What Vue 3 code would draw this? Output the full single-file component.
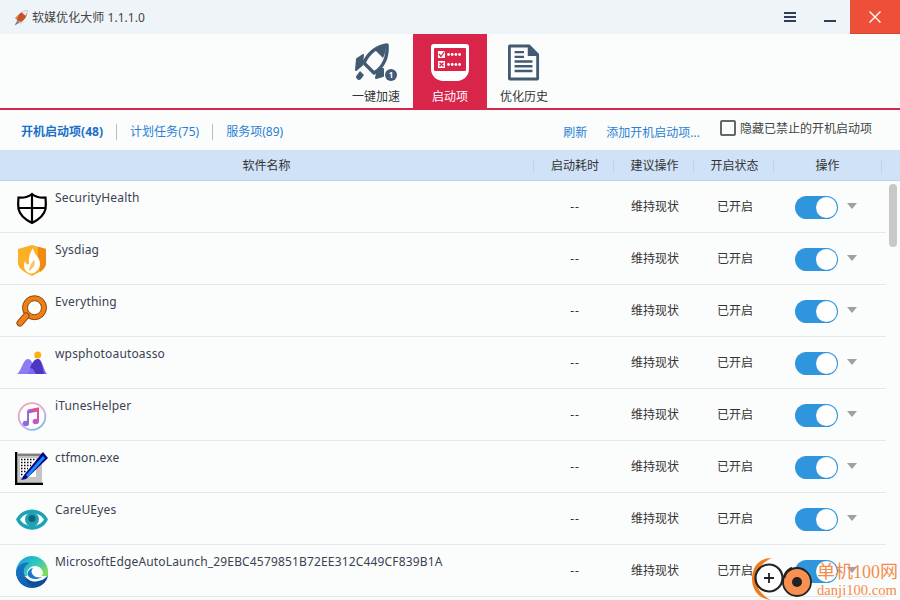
<script setup>
const apps = [
  { name: 'SecurityHealth', icon: 'shield' },
  { name: 'Sysdiag', icon: 'flame' },
  { name: 'Everything', icon: 'search' },
  { name: 'wpsphotoautoasso', icon: 'wps' },
  { name: 'iTunesHelper', icon: 'itunes' },
  { name: 'ctfmon.exe', icon: 'ctf' },
  { name: 'CareUEyes', icon: 'eye' },
  { name: 'MicrosoftEdgeAutoLaunch_29EBC4579851B72EE312C449CF839B1A', icon: 'edge' },
]
</script>

<template>
  <div class="win">
    <div class="titlebar">
      <svg class="logo" width="14" height="17" viewBox="0 0 14 17">
        <path d="M13.500 1 C9 1.500 5 4 3.500 8 L3 12 L7 13 C11 11 13.500 6 13.500 1Z" fill="#c2542a" />
        <path d="M13.500 1 C11 1.200 9 2 7.500 3.200 L11.300 6.800 C12.700 5 13.500 3 13.500 1Z" fill="#e8e8e8" />
        <path d="M4 6 L1 9 L3 11Z M7 13 L6 16 L9 11Z" fill="#e07a30" />
        <path d="M3 12 L0.500 16.500 L6 13.500Z" fill="#6f7f90" />
      </svg>
      <span class="title">软媒优化大师 1.1.1.0</span>
      <div class="winbtns">
        <div class="btn">
          <span class="menu"><i></i><i></i><i></i></span>
        </div>
        <div class="btn"><span class="min"></span></div>
        <div class="btn close">
          <svg width="12" height="12" viewBox="0 0 12 12">
            <path d="M0.500 0.500 L11.500 11.500 M11.500 0.500 L0.500 11.500" stroke="#fff" stroke-width="1.400" />
          </svg>
        </div>
      </div>
    </div>

    <div class="toolbar">
      <div class="tool">
        <svg class="rocket" width="50" height="45" viewBox="0 0 50 45">
          <g fill="#435a73" stroke="#435a73" stroke-width="2" stroke-linejoin="round">
            <path d="M13 15 L7 19 L6 30 L12 25Z" />
            <path d="M28 29 L26 38 L33 36 L33 29Z" />
          </g>
          <path d="M37 5 C27 6 18 13 14 23 L24 33 C34 27 38 16 37 5Z" fill="#fcfefe" stroke="#435a73" stroke-width="3.400" stroke-linejoin="round" />
          <path d="M25 10 C29 7 33 6 36 6 C36 10 35 14 33 18Z" fill="#435a73" />
          <path d="M10 31 L14 35 L11 39 A2.800 2.800 0 0 1 7 35Z" fill="#435a73" />
          <circle cx="41" cy="35" r="6" fill="#435a73" />
          <text x="41" y="38" class="badge">1</text>
        </svg>
        <span>一键加速</span>
      </div>
      <div class="tool active">
        <svg width="38" height="37" viewBox="0 0 38 37">
          <path d="M3 0 H35 A3 3 0 0 1 38 3 V25 C38 32 32 37 26 37 H12 C6 37 0 32 0 25 V3 A3 3 0 0 1 3 0Z" fill="#fff" />
          <rect x="3" y="4" width="32" height="23" rx="1" fill="#d9254a" />
          <rect x="7" y="7" width="7" height="7" fill="#fff" />
          <rect x="7" y="17" width="7" height="7" fill="#fff" />
          <path d="M8 10 L10 12.500 L13.500 7.500" stroke="#d9254a" fill="none" stroke-width="1.300" />
          <path d="M8.500 18.500 L12.500 22.500 M12.500 18.500 L8.500 22.500" stroke="#d9254a" fill="none" stroke-width="1.300" />
          <g fill="#fff">
            <circle cx="17.500" cy="10.500" r="1.400" /><circle cx="21.200" cy="10.500" r="1.400" /><circle cx="24.900" cy="10.500" r="1.400" /><circle cx="28.600" cy="10.500" r="1.400" />
            <circle cx="17.500" cy="20.500" r="1.400" /><circle cx="21.200" cy="20.500" r="1.400" /><circle cx="24.900" cy="20.500" r="1.400" /><circle cx="28.600" cy="20.500" r="1.400" />
          </g>
        </svg>
        <span>启动项</span>
      </div>
      <div class="tool">
        <svg width="32" height="37" viewBox="0 0 34 38">
          <path d="M2 0 H23 L33 10 V36 A2 2 0 0 1 31 38 H2 A2 2 0 0 1 0 36 V2 A2 2 0 0 1 2 0Z" fill="#435a73" />
          <path d="M3 3 H21 V12 H30 V35 H3Z" fill="#fcfefe" />
          <path d="M7 8 H17 M7 13 H17 M7 18 H26 M7 23 H26 M7 28 H26" stroke="#435a73" stroke-width="2.600" />
        </svg>
        <span>优化历史</span>
      </div>
    </div>

    <div class="tabs">
      <a class="tab on">开机启动项(48)</a>
      <a class="tab">计划任务(75)</a>
      <a class="tab">服务项(89)</a>
      <div class="spacer"></div>
      <a class="link refresh">刷新</a>
      <a class="link">添加开机启动项...</a>
      <label class="hide"><span class="check"></span>隐藏已禁止的开机启动项</label>
    </div>

    <div class="head">
      <div class="c-name">软件名称</div>
      <div class="c-time">启动耗时</div>
      <div class="c-tip">建议操作</div>
      <div class="c-state">开启状态</div>
      <div class="c-op">操作</div>
    </div>

    <div class="list">
      <div class="rows">
        <div v-for="a in apps" :key="a.name" class="row">
          <div class="c-name cell-name">
            <svg class="appicon" width="34" height="34" viewBox="0 0 34 34">
              <template v-if="a.icon === 'shield'">
                <path d="M17 3 C20 5.500 25 7 30.500 6.500 C31 11 31 14 30.500 18 C29 25 23 29 17 32 C11 29 5 25 3.500 18 C3 14 3 11 3.500 6.500 C9 7 14 5.500 17 3Z" fill="#fff" stroke="#000" stroke-width="2.200" />
                <path d="M17 3 V32 M3.500 17 H30.500" stroke="#000" stroke-width="2.200" />
              </template>
              <template v-else-if="a.icon === 'flame'">
                <path d="M3 6 L17 2 L31 6 V20 C31 26 23 30 17 33 C11 30 3 26 3 20Z" fill="#fbb025" />
                <path d="M23 3.700 L31 6 V20 C31 24 28 27 25 29 L23 15Z" fill="#f28a12" />
                <path d="M18 5 C19 12 26 15 25 22 C24 28 18 32 14 30 C9 28 8 23 10 18 C11 21 12 22 14 21 C13 15 15 10 18 5Z" fill="#fff" />
                <path d="M19 17 C21 21 19 25 14 28 C14 24 16 20 19 17Z" fill="#fbc46a" />
              </template>
              <template v-else-if="a.icon === 'search'">
                <circle cx="19.500" cy="12.700" r="9.500" fill="#fff" stroke="#f08015" stroke-width="5" />
                <circle cx="19.500" cy="12.700" r="12" fill="none" stroke="#8a4510" stroke-width="1" />
                <circle cx="19.500" cy="12.700" r="7" fill="none" stroke="#8a4510" stroke-width="1" />
                <path d="M11 21 L5 28" stroke="#8a4510" stroke-width="7" stroke-linecap="round" />
                <path d="M11 21 L5 28" stroke="#f08015" stroke-width="5" stroke-linecap="round" />
              </template>
              <template v-else-if="a.icon === 'wps'">
                <circle cx="22.700" cy="8" r="3.500" fill="#fbb116" />
                <path d="M2 27 C6 25 8 12 13 12 C17 12 18 18 20 27Z" fill="#8a7cf5" />
                <path d="M12 27 C16 25 18 12 23 12 C27 12 29 24 32 27Z" fill="#7a68f0" />
                <path d="M15 21 C17 16 19 12 23 12 C25 12 26 14 27 18 L29 27 H21 L18 22Z" fill="#4f36c2" />
              </template>
              <template v-else-if="a.icon === 'itunes'">
                <defs>
                  <linearGradient id="itg" x1="0.800" y1="0" x2="0.200" y2="1">
                    <stop offset="0" stop-color="#f04f72" />
                    <stop offset="0.600" stop-color="#b45ad8" />
                    <stop offset="1" stop-color="#6a7ce8" />
                  </linearGradient>
                  <linearGradient id="itr" x1="0.100" y1="0" x2="0.900" y2="1">
                    <stop offset="0" stop-color="#f2a0b4" />
                    <stop offset="0.600" stop-color="#cdb0e8" />
                    <stop offset="1" stop-color="#5ab8ef" />
                  </linearGradient>
                </defs>
                <circle cx="17" cy="17.500" r="13.300" fill="#fff" stroke="url(#itr)" stroke-width="1.800" />
                <path d="M13 11.500 L23 9.500 V22 M13 11.500 V24.500" stroke="url(#itg)" stroke-width="2" fill="none" />
                <path d="M13 11.500 L23 9.500 V12.500 L13 14.500Z" fill="url(#itg)" />
                <ellipse cx="10.800" cy="24.500" rx="3.200" ry="2.700" fill="#8a6ae0" />
                <ellipse cx="20.800" cy="22.500" rx="3.200" ry="2.700" fill="#c45ac8" />
              </template>
              <template v-else-if="a.icon === 'ctf'">
                <rect x="1" y="2" width="26" height="30" fill="#c4c4c4" />
                <path d="M1 1 V33 H28" fill="none" stroke="#000" stroke-width="2.500" />
                <rect x="3" y="3" width="24" height="2" fill="#808080" />
                <rect x="5" y="7" width="16" height="19" fill="#fff" />
                <path d="M6 8.500 H20 M6 11.500 H18 M6 14.500 H16 M6 17.500 H13 M6 20.500 H11 M6 23.500 H9" stroke="#000" stroke-width="1.500" stroke-dasharray="1.500 1.500" />
                <path d="M9 24 L6 29 L11 28 L33 7 L28 1Z" fill="#050580" />
                <path d="M11 24 L28 5 L30 7 L13 26Z" fill="#1a8cff" />
              </template>
              <template v-else-if="a.icon === 'eye'">
                <path d="M1 16.500 C7 3 27 3 33 16.500 C27 30 7 30 1 16.500Z" fill="#1ea3b6" />
                <path d="M5 16.500 C10 8 24 8 29 16.500 C24 25 10 25 5 16.500Z" fill="#fff" />
                <circle cx="17" cy="16.500" r="7" fill="#1ea3b6" />
                <circle cx="17" cy="15.500" r="3.500" fill="#12607a" />
              </template>
              <template v-else-if="a.icon === 'edge'">
                <defs>
                  <linearGradient id="edg" x1="0.100" y1="0" x2="1" y2="0.700">
                    <stop offset="0" stop-color="#1a9fdc" />
                    <stop offset="0.550" stop-color="#2fc7c0" />
                    <stop offset="1" stop-color="#7edc5c" />
                  </linearGradient>
                  <linearGradient id="edb" x1="0" y1="0" x2="0.500" y2="1">
                    <stop offset="0" stop-color="#1a78c8" />
                    <stop offset="1" stop-color="#0e5fb0" />
                  </linearGradient>
                </defs>
                <path d="M1 17 A16 16 0 0 1 33 17 L33 21 H1Z" fill="url(#edg)" />
                <path d="M12 19 C12 14 16 11 20 11 C25 11 28 15 28 18 C28 20 27 21 25 21 L33 21 C31 27 27 31 22 32 L12 26Z" fill="#fbfdfd" />
                <path d="M1 17 C2 10 9 6 15 8 C10 10 8 14 9 19 C10 26 17 32 24 31 C21 33 19 33 17 33 C8 33 1 26 1 17Z" fill="url(#edb)" />
                <path d="M9 19 C11 24 16 27 21 26.500 C26 26 30 24 33 20.500 C32 26 28 31 22 32 C15 32 10 26 9 19Z" fill="#0c4f98" />
                <path d="M12.500 20 C12.500 16 15 13.500 18 13 C16 15 16 18 18 20 C20 22.500 24 23 27 22 C23 25 15 25 12.500 20Z" fill="#1a78c8" />
              </template>
            </svg>
            <span class="appname">{{ a.name }}</span>
          </div>
          <div class="c-time dash">--</div>
          <div class="c-tip">维持现状</div>
          <div class="c-state">已开启</div>
          <div class="c-op">
            <span class="switch"><i></i></span>
            <span class="caret"></span>
          </div>
        </div>
      </div>
      <div class="scroll"><div class="thumb"></div></div>
    </div>

    <div class="wm">
      <svg width="67" height="46" viewBox="0 0 67 46">
        <path d="M22 4 C8 4 2 14 2 25 C2 36 9 45 21 46 C13 42 6 35 6 25 C6 15 13 8 22 4Z" fill="#f07c1e" />
        <circle cx="19" cy="24" r="13.500" fill="#fff" stroke="#222" stroke-width="2.200" />
        <path d="M14 24 H24 M19 19 V29" stroke="#222" stroke-width="1.800" />
        <circle cx="47" cy="28" r="14" fill="#f89050" stroke="#222" stroke-width="1.800" />
        <circle cx="47" cy="28" r="5" fill="#222" />
        <path d="M34 24 A14 14 0 0 1 42 14" fill="none" stroke="#222" stroke-width="2.500" />
      </svg>
      <div class="wm-text">
        <div class="wm-cn">单机100网</div>
        <div class="wm-en">danji100.com</div>
      </div>
    </div>
  </div>
</template>

<style scoped>
.win {
  position: relative;
  width: 900px;
  height: 600px;
  overflow: hidden;
  background: #fbfdfd;
  color: #333;
  font-family: "Noto Sans", "Noto Sans CJK SC", sans-serif;
  font-size: 12px;
}

.titlebar {
  height: 34px;
  display: flex;
  align-items: center;
  background: #eff4f9;
  padding-left: 14px;
}
.logo {
  margin-right: 4px;
}
.title {
  font-size: 12px;
  color: #444;
  letter-spacing: 0.05px;
}
.winbtns {
  margin-left: auto;
  display: flex;
  height: 34px;
}
.btn {
  width: 40px;
  display: flex;
  align-items: center;
  justify-content: center;
}
.menu {
  display: flex;
  flex-direction: column;
  gap: 2px;
  width: 12px;
}
.menu i {
  height: 2px;
  background: #2e4059;
}
.min {
  width: 12px;
  height: 2px;
  background: #2e4059;
  margin-top: 8px;
}
.close {
  width: 50px;
  background: #ed4f38;
  border-bottom: 1px solid #d4452f;
  box-sizing: border-box;
}

.toolbar {
  height: 74px;
  display: flex;
  justify-content: center;
  border-bottom: 2px solid #d9254a;
}
.tool {
  width: 74px;
  height: 74px;
  display: flex;
  flex-direction: column;
  align-items: center;
  justify-content: flex-end;
  padding-bottom: 2px;
  box-sizing: border-box;
  color: #333;
}
.tool svg {
  margin-bottom: 7px;
}
.tool svg.rocket {
  margin: 0 0 3px -2px;
}
.tool span {
  line-height: 18px;
}
.tool.active {
  background: #d9254a;
  color: #fff;
}
.badge {
  font-size: 8px;
  font-weight: 700;
  fill: #fff;
  text-anchor: middle;
}

.tabs {
  height: 40px;
  display: flex;
  align-items: center;
  padding: 3px 28px 0 21px;
  box-sizing: border-box;
  color: #1976d2;
}
.tab {
  padding-right: 13px;
  margin-right: 13px;
  border-right: 1px solid #bbb;
  line-height: 16px;
  color: #2a7fd4;
  letter-spacing: 0.02px;
}
.tab.on {
  padding-right: 13px;
  font-weight: 700;
  color: #1a6fc9;
}
.tab:nth-child(3) {
  border-right: none;
}
.spacer {
  flex: 1;
}
.link {
  color: #2a7fd4;
}
.refresh {
  margin-right: 19px;
}
.hide {
  display: flex;
  align-items: center;
  color: #444;
  margin-left: 20px;
  position: relative;
  top: -4px;
}
.check {
  width: 16px;
  height: 16px;
  border: 2px solid #666;
  border-radius: 2px;
  margin-right: 4px;
  box-sizing: border-box;
}

.head {
  height: 31px;
  display: flex;
  align-items: center;
  background: #d0e2f8;
  border-bottom: 1px solid #bcd3ea;
  box-sizing: border-box;
  padding-top: 2px;
  color: #333;
}
.head > div {
  line-height: 14px;
  border-right: 1px solid #bfd2e6;
  box-sizing: border-box;
  text-align: center;
}
.head .c-op {
  display: block;
  padding-right: 0;
}

.c-name {
  width: 534px;
  flex: none;
}
.c-time,
.c-tip,
.c-state {
  width: 80px;
  flex: none;
  text-align: center;
  padding-left: 2px;
  box-sizing: border-box;
}
.head .c-time {
  padding-left: 3px;
}
.row .c-tip,
.row .c-state {
  padding-bottom: 2px;
}
.c-op {
  width: 108px;
  flex: none;
  box-sizing: border-box;
  display: flex;
  align-items: center;
  justify-content: center;
  gap: 9px;
  padding-right: 4px;
}

.list {
  display: flex;
  height: 419px;
}
.rows {
  width: 886px;
  flex: none;
}
.row {
  height: 52px;
  display: flex;
  align-items: center;
  border-bottom: 1px solid #e4e7e9;
  box-sizing: border-box;
}
.dash {
  letter-spacing: 1px;
}
.cell-name {
  display: flex;
  height: 100%;
  padding-left: 15px;
  box-sizing: border-box;
  align-items: center;
}
.appicon {
  flex: none;
  margin-top: 2px;
}
.appname {
  margin-left: 6px;
  align-self: flex-start;
  margin-top: 8px;
  color: #3a4252;
  white-space: nowrap;
  letter-spacing: 0.16px;
}
.switch {
  width: 43px;
  height: 23px;
  border-radius: 12px;
  background: #2f95dc;
  position: relative;
  display: block;
  margin-top: 2px;
}
.switch i {
  position: absolute;
  right: 1px;
  top: 1px;
  width: 21px;
  height: 21px;
  border-radius: 50%;
  background: #fff;
}
.caret {
  width: 0;
  height: 0;
  border-left: 5.500px solid transparent;
  border-right: 5.500px solid transparent;
  border-top: 6px solid #a0a0a0;
  margin-top: -2px;
}
.scroll {
  flex: 1;
  padding: 3px 3px 0;
}
.thumb {
  width: 8px;
  height: 63px;
  border-radius: 4px;
  background: #c8c8c8;
}

.wm {
  position: absolute;
  left: 750px;
  top: 554px;
  display: flex;
  align-items: flex-start;
}
.wm-text {
  margin-top: 8px;
  color: #f58a4b;
  white-space: nowrap;
  font-family: "Liberation Serif", "Noto Sans CJK SC", serif;
}
.wm-cn {
  font-size: 18px;
  line-height: 21px;
}
.wm-en {
  font-size: 14.600px;
  line-height: 14px;
}
</style>
